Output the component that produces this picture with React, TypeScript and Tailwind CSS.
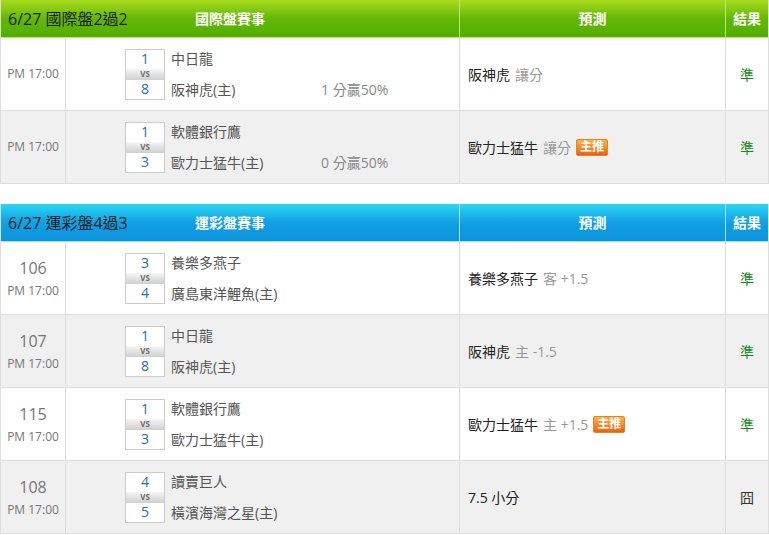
const FONT = "font-['Open_Sans','Noto_Sans_CJK_TC',sans-serif]";

interface Game {
  no?: string;
  time: string;
  away: string;
  home: string;
  awayScore: number;
  homeScore: number;
  handicap?: string;
  pick: string;
  pickNote: string;
  hot?: boolean;
  result: 'win' | 'lose';
}

interface Section {
  title: string;
  caption: string;
  theme: 'green' | 'blue';
  games: Game[];
}

const sections: Section[] = [
  {
    title: '6/27 國際盤2過2',
    caption: '國際盤賽事',
    theme: 'green',
    games: [
      { time: 'PM 17:00', away: '中日龍', home: '阪神虎(主)', awayScore: 1, homeScore: 8, handicap: '1 分贏50%', pick: '阪神虎', pickNote: '讓分', result: 'win' },
      { time: 'PM 17:00', away: '軟體銀行鷹', home: '歐力士猛牛(主)', awayScore: 1, homeScore: 3, handicap: '0 分贏50%', pick: '歐力士猛牛', pickNote: '讓分', hot: true, result: 'win' },
    ],
  },
  {
    title: '6/27 運彩盤4過3',
    caption: '運彩盤賽事',
    theme: 'blue',
    games: [
      { no: '106', time: 'PM 17:00', away: '養樂多燕子', home: '廣島東洋鯉魚(主)', awayScore: 3, homeScore: 4, pick: '養樂多燕子', pickNote: '客 +1.5', result: 'win' },
      { no: '107', time: 'PM 17:00', away: '中日龍', home: '阪神虎(主)', awayScore: 1, homeScore: 8, pick: '阪神虎', pickNote: '主 -1.5', result: 'win' },
      { no: '115', time: 'PM 17:00', away: '軟體銀行鷹', home: '歐力士猛牛(主)', awayScore: 1, homeScore: 3, pick: '歐力士猛牛', pickNote: '主 +1.5', hot: true, result: 'win' },
      { no: '108', time: 'PM 17:00', away: '讀賣巨人', home: '橫濱海灣之星(主)', awayScore: 4, homeScore: 5, pick: '7.5 小分', pickNote: '', result: 'lose' },
    ],
  },
];

function ScoreBox({ a, b }: { a: number; b: number }) {
  return (
    <div className="w-[40px] border border-[#cccccc] bg-white flex flex-col">
      <div className="h-[19px] flex items-center justify-center text-[14px] leading-none text-[#1a6fb8]">{a}</div>
      <div className="h-[11px] flex items-center justify-center bg-gradient-to-b from-[#f6f6f6] via-[#e2e2e2] to-[#cfcfcf] text-[8px] font-bold leading-none text-[#6f6f6f]">
        VS
      </div>
      <div className="h-[19px] flex items-center justify-center text-[14px] leading-none text-[#1a6fb8]">{b}</div>
    </div>
  );
}

function HotBadge() {
  return (
    <span className="ml-[5px] inline-flex items-center h-[17px] px-[3px] rounded-[2px] border border-[#e9811f] bg-gradient-to-b from-[#fbb04b] to-[#ea620c] text-[12px] leading-none font-bold text-white">
      主推
    </span>
  );
}

function GameRow({ g, odd }: { g: Game; odd: boolean }) {
  return (
    <div className={`flex h-[73px] border-b border-[#dddddd] ${odd ? 'bg-[#f0f0f0]' : 'bg-white'}`}>
      <div className="w-[65px] shrink-0 border-r border-[#dddddd] flex flex-col items-center justify-center text-[#777]">
        {g.no && <div className="text-[16px] leading-[20px] mb-[5px]">{g.no}</div>}
        <div className="text-[12px] leading-[16px]">{g.time}</div>
      </div>
      <div className="w-[394px] shrink-0 border-r border-[#dddddd] flex items-center pl-[59px]">
        <ScoreBox a={g.awayScore} b={g.homeScore} />
        <div className="ml-[6px] flex flex-col gap-[11px] text-[14px] leading-[20px] text-[#555]">
          <div>{g.away}</div>
          <div className="flex">
            <span className="w-[150px]">{g.home}</span>
            {g.handicap && <span className="text-[#888]">{g.handicap}</span>}
          </div>
        </div>
      </div>
      <div className="w-[266px] shrink-0 border-r border-[#dddddd] flex items-center pl-[8px] text-[14px]">
        <span className="text-[#222]">{g.pick}</span>
        {g.pickNote && <span className="ml-[5px] text-[#999]">{g.pickNote}</span>}
        {g.hot && <HotBadge />}
      </div>
      <div className="flex-1 flex items-center justify-center text-[14px]">
        {g.result === 'win' ? <span className="text-[#138a22]">準</span> : <span className="text-[#333]">囧</span>}
      </div>
    </div>
  );
}

function SectionTable({ s }: { s: Section }) {
  const head =
    s.theme === 'green'
      ? 'bg-gradient-to-b from-[#a6dc1c] via-[#63b806] to-[#52ad00] border-[#b9ea6a]'
      : 'bg-gradient-to-b from-[#2bd8f3] via-[#129fe3] to-[#0b94dd] border-[#9fe4f7]';
  const sep = s.theme === 'green' ? 'border-[#b9ea6a]' : 'border-[#9fe4f7]';
  return (
    <div className="border-l border-r border-[#dddddd]">
      <div className={`flex h-[38px] border-b ${head}`}>
        <div className={`w-[459px] shrink-0 relative flex items-center justify-center border-r ${sep}`}>
          <span className="absolute left-[7px] text-[16px] text-[#1e1e1e]">{s.title}</span>
          <span className="text-[14px] font-bold text-white">{s.caption}</span>
        </div>
        <div className={`w-[266px] shrink-0 flex items-center justify-center border-r ${sep} text-[14px] font-bold text-white`}>
          預測
        </div>
        <div className="flex-1 flex items-center justify-center text-[14px] font-bold text-white">結果</div>
      </div>
      {s.games.map((g, i) => (
        <GameRow key={i} g={g} odd={i % 2 === 1} />
      ))}
    </div>
  );
}

export default function App() {
  return (
    <div className={`w-[769px] h-[535px] bg-white overflow-hidden ${FONT}`}>
      <SectionTable s={sections[0]} />
      <div className="h-[20px]" />
      <SectionTable s={sections[1]} />
    </div>
  );
}
